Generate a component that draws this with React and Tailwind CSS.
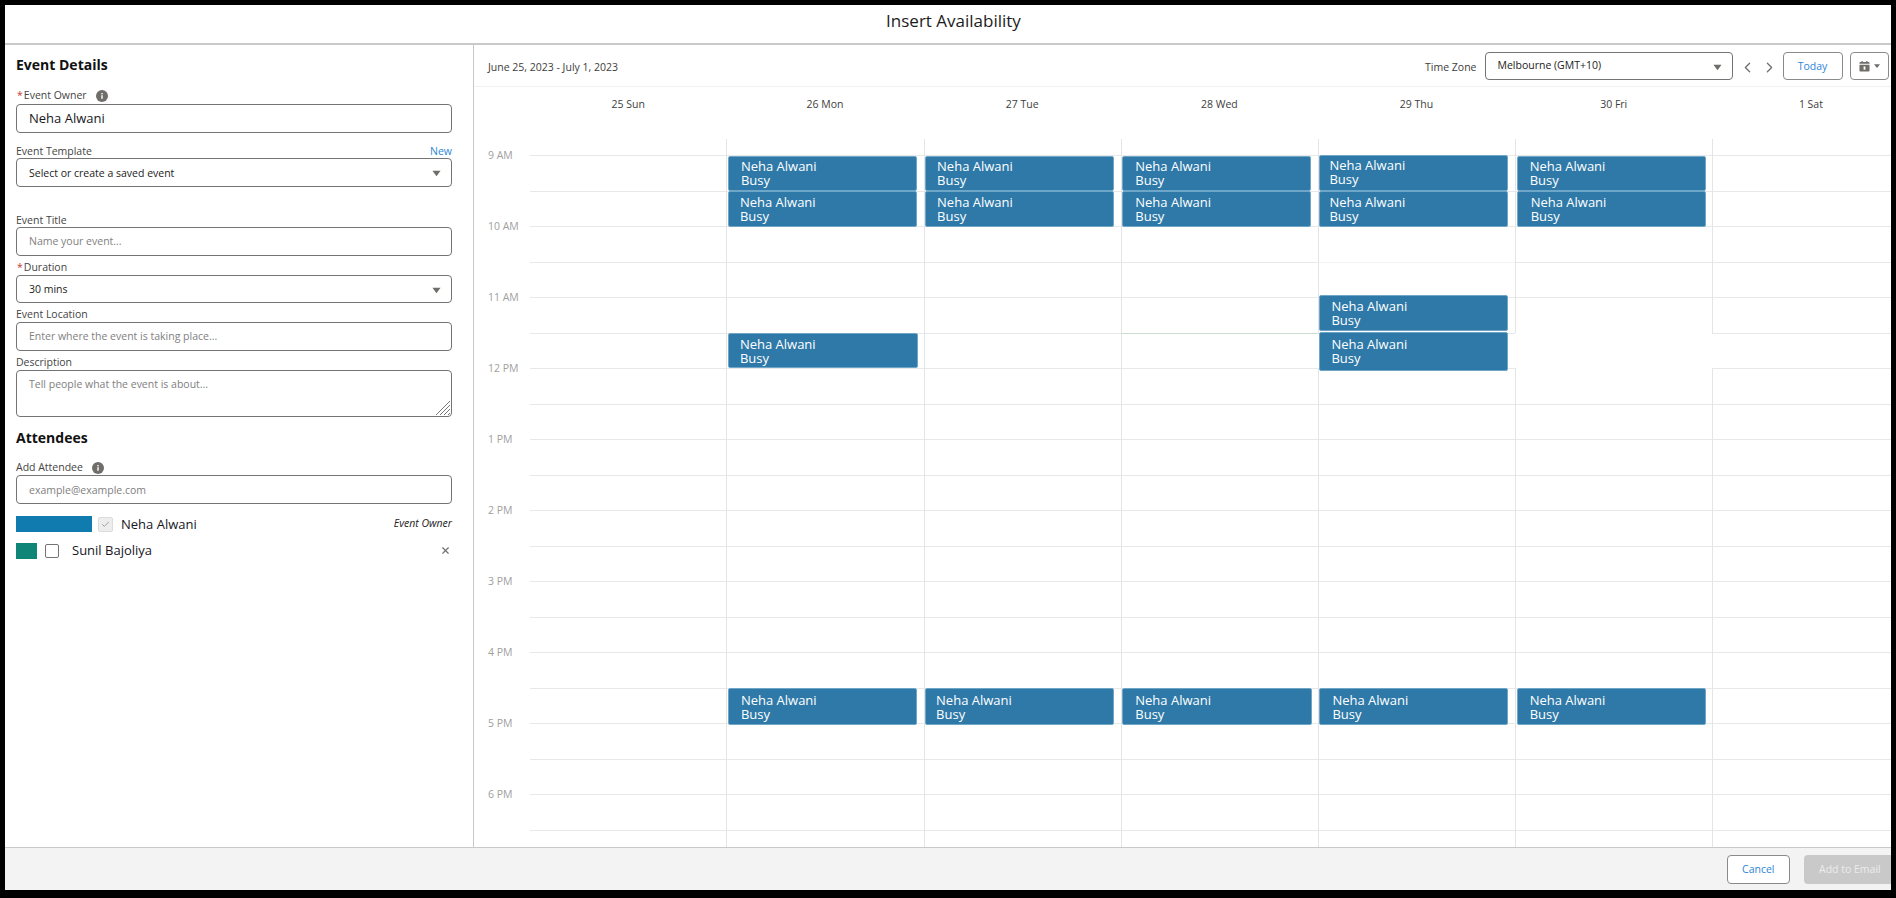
import React from "react";
import { ChevronLeft, ChevronRight, Check, X } from "lucide-react";

const hours = ["9 AM", "10 AM", "11 AM", "12 PM", "1 PM", "2 PM", "3 PM", "4 PM", "5 PM", "6 PM"];
const rows = Array.from({ length: 20 }, (_, i) => i);

// pos = top / height / left / width inside the day column, text = left padding, top padding and line height
const mon = [
  { pos: "top-[17px] h-[35px] left-[1.5px] w-[189px]", text: "pl-[12px] pt-[3px] leading-[13.5px]" },
  { pos: "top-[52px] h-[35.5px] left-[1.5px] w-[189px]", text: "pl-[11px] pt-[3px] leading-[14px]" },
  { pos: "top-[194px] h-[35px] left-[1.5px] w-[190px]", text: "pl-[11px] pt-[4px] leading-[13.5px]" },
  { pos: "top-[549px] h-[36.5px] left-[1.5px] w-[189px]", text: "pl-[12px] pt-[5px] leading-[13.5px]" },
];
const tue = [
  { pos: "top-[17px] h-[35px] left-[1.5px] w-[189px]", text: "pl-[11px] pt-[3px] leading-[13.5px]" },
  { pos: "top-[52px] h-[35.5px] left-[1.5px] w-[189px]", text: "pl-[11px] pt-[3px] leading-[14px]" },
  { pos: "top-[549px] h-[36.5px] left-[1.5px] w-[189px]", text: "pl-[10px] pt-[5px] leading-[13.5px]" },
];
const wed = [
  { pos: "top-[17px] h-[35px] left-[1.5px] w-[189px]", text: "pl-[12px] pt-[3px] leading-[13.5px]" },
  { pos: "top-[52px] h-[35.5px] left-[1.5px] w-[189px]", text: "pl-[12px] pt-[3px] leading-[14px]" },
  { pos: "top-[549px] h-[36.5px] left-[1.5px] w-[190px]", text: "pl-[12px] pt-[5px] leading-[13.5px]" },
];
const thu = [
  { pos: "top-[16px] h-[36px] left-[1.5px] w-[189px]", text: "pl-[9px] pt-[3px] leading-[13.5px]" },
  { pos: "top-[52px] h-[35.5px] left-[1.5px] w-[189px]", text: "pl-[9px] pt-[3px] leading-[14px]" },
  { pos: "top-[156px] h-[36px] left-[1.5px] w-[189px]", text: "pl-[11px] pt-[3px] leading-[14px]" },
  { pos: "top-[193px] h-[39px] left-[1.5px] w-[189px]", text: "pl-[11px] pt-[4px] leading-[14px]" },
  { pos: "top-[549px] h-[36.5px] left-[1.5px] w-[189px]", text: "pl-[12px] pt-[5px] leading-[13.5px]" },
];
const fri = [
  { pos: "top-[17px] h-[35px] left-[1.5px] w-[189px]", text: "pl-[12px] pt-[3px] leading-[13.5px]" },
  { pos: "top-[52px] h-[35.5px] left-[1.5px] w-[189px]", text: "pl-[13px] pt-[3px] leading-[14px]" },
  { pos: "top-[549px] h-[36.5px] left-[1.5px] w-[189px]", text: "pl-[12px] pt-[5px] leading-[13.5px]" },
];

const days = [
  { label: "25 Sun", width: "w-[196.4px]", first: true, events: [] },
  { label: "26 Mon", width: "w-[197.2px]", events: mon },
  { label: "27 Tue", width: "w-[197.2px]", events: tue },
  { label: "28 Wed", width: "w-[197.2px]", events: wed, greenRow: 5 },
  { label: "29 Thu", width: "w-[197.2px]", events: thu, faintRow: 3, noLeft: [5] },
  { label: "30 Fri", width: "w-[197.2px]", events: fri, noTop: [5, 6], noLeft: [5] },
  { label: "1 Sat", width: "w-[197.2px]", events: [], noLeft: [5] },
];

const cellClass = (day, row) => {
  let top = "border-t border-t-[#e8e8e8]";
  if (day.noTop && day.noTop.includes(row)) top = "";
  if (day.greenRow === row) top = "border-t border-t-[#cfdcd2]";
  if (day.faintRow === row) top = "border-t border-t-[#f3f3f3]";
  const left = day.first || (day.noLeft && day.noLeft.includes(row)) ? "" : "border-l border-l-[#e4e4e4]";
  return `h-[35.5px] ${top} ${left}`;
};

const InfoIcon = () => (
  <svg viewBox="0 0 12 12" className="w-3 h-3 ml-[9px]">
    <circle cx="6" cy="6" r="6" fill="#706e6b" />
    <rect x="5.3" y="5.2" width="1.4" height="3.6" fill="#fff" />
    <rect x="5.3" y="3" width="1.4" height="1.4" fill="#fff" />
  </svg>
);

const Caret = () => (
  <svg viewBox="0 0 10 7" className="w-[9px] h-[7px] mt-[3px]">
    <path d="M0.5 0.5h9L5 6.5z" fill="#706e6b" />
  </svg>
);

const Label = ({ required, children, className = "" }) => (
  <div className={`flex items-center h-[14px] text-[10.5px] text-[#444] ${className}`}>
    {required && <span className="text-[#c23934] ml-[1px] mr-[1px]">*</span>}
    {children}
  </div>
);

const TextInput = ({ placeholder }) => (
  <input
    readOnly
    placeholder={placeholder}
    className="block w-full h-[28.5px] px-[12px] border border-[#747474] rounded-[4px] bg-white text-[10.5px] placeholder:text-[#808080] outline-none"
  />
);

const SelectBox = ({ value, className = "", textClass = "" }) => (
  <div className={`flex items-center justify-between h-[28.5px] pl-[12px] pr-[10px] border border-[#747474] rounded-[4px] bg-white text-[10.5px] text-[#222] ${className}`}>
    <span className={textClass}>{value}</span>
    <Caret />
  </div>
);

const EventCard = ({ pos, text }) => (
  <div className={`absolute ${pos} bg-[#2e79a8] border border-[#6ea6c8] rounded-[2px] text-white text-[13px] ${text}`}>
    <div>Neha Alwani</div>
    <div>Busy</div>
  </div>
);

export default function App() {
  return (
    <div className="h-[898px] w-full bg-black pt-[5px] pl-[5px] pr-[5px] pb-[8px] font-['Open_Sans',sans-serif]">
      <div className="h-full flex flex-col bg-white overflow-hidden">
        <div className="h-[40px] shrink-0 flex items-center justify-center border-b-2 border-[#c9c9c9] pb-[7px] pl-[11px] text-[17px] text-[#1c1c1c]">
          Insert Availability
        </div>

        <div className="flex-1 min-h-0 flex">
          {/* Event form */}
          <div className="w-[469px] shrink-0 border-r border-[#c9c9c9] pl-[11px] pr-[21px] pt-[12px]">
            <h2 className="text-[14px] leading-[16px] font-bold text-[#111]">Event Details</h2>
            <Label required className="mt-[16px] mb-[1px]">
              Event Owner
              <InfoIcon />
            </Label>
            <div className="flex items-center h-[28.5px] pt-[1px] px-[12px] border border-[#747474] rounded-[4px] text-[13px] text-[#16161d]">
              Neha Alwani
            </div>

            <div className="flex justify-between items-center mt-[12px] -mb-[1.5px] h-[15px] text-[10.5px]">
              <span className="text-[#444]">Event Template</span>
              <span className="text-[#2f85d8]">New</span>
            </div>
            <SelectBox value="Select or create a saved event" textClass="mt-[3px]" />

            <Label className="mt-[27px] -mb-[0.5px]">Event Title</Label>
            <TextInput placeholder="Name your event..." />

            <Label required className="mt-[5px]">Duration</Label>
            <SelectBox value="30 mins" textClass="mt-[2px]" />

            <Label className="mt-[4.5px] mb-[0.7px]">Event Location</Label>
            <TextInput placeholder="Enter where the event is taking place..." />

            <Label className="mt-[4.8px] mb-[0.7px]">Description</Label>
            <div className="relative">
              <textarea
                readOnly
                placeholder="Tell people what the event is about..."
                className="block w-full h-[47px] px-[12px] py-[6px] resize-none border border-[#747474] rounded-[4px] text-[10.5px] placeholder:text-[#808080] outline-none"
              />
              <svg viewBox="0 0 16 16" className="absolute right-[1px] bottom-[1px] w-4 h-4">
                <path d="M1 15L15 1M5 15L15 5M9 15L15 9M13 15L15 13" stroke="#777" strokeWidth="1" fill="none" />
              </svg>
            </div>

            <h2 className="mt-[13.2px] text-[14px] leading-[16px] font-bold text-[#111]">Attendees</h2>
            <Label className="mt-[14.3px] mb-[0.7px]">
              Add Attendee
              <InfoIcon />
            </Label>
            <TextInput placeholder="example@example.com" />

            <div className="flex items-center mt-[12.5px] h-[16px]">
              <div className="w-[76px] h-[16px] bg-[#0f7bae]" />
              <div className="ml-[6px] w-[15px] h-[15px] flex items-center justify-center bg-[#ededed] border border-[#dcdcdc] rounded-[2px]">
                <Check size={9} color="#9a9a9a" strokeWidth={2.5} />
              </div>
              <span className="ml-[8px] mt-[1px] text-[13px] text-[#16161d]">Neha Alwani</span>
              <span className="ml-auto text-[10.5px] italic text-[#222]">Event Owner</span>
            </div>
            <div className="flex items-center mt-[10.3px] h-[16px]">
              <div className="w-[21px] h-[16px] bg-[#0f8578]" />
              <div className="ml-[8px] w-[14px] h-[14px] bg-white border border-[#747474] rounded-[2px]" />
              <span className="ml-[13px] text-[13px] text-[#16161d]">Sunil Bajoliya</span>
              <X size={11} color="#706e6b" strokeWidth={2.5} className="ml-auto mr-[1px]" />
            </div>
          </div>

          {/* Calendar */}
          <div className="flex-1 min-w-0 flex flex-col overflow-hidden">
            <div className="h-[42px] shrink-0 flex items-center border-b border-[#f1f1f1] pl-[14px] pr-[2px] pt-[1px]">
              <span className="mt-[3px] text-[10.5px] text-[#3e3e3c]">June 25, 2023 - July 1, 2023</span>
              <span className="ml-auto mr-[8px] mt-[3px] text-[10.5px] text-[#3e3e3c]">Time Zone</span>
              <SelectBox value="Melbourne (GMT+10)" className="w-[248px]" />
              <ChevronLeft size={17} color="#706e6b" strokeWidth={1.8} className="ml-[6px] mt-[3px]" />
              <ChevronRight size={17} color="#706e6b" strokeWidth={1.8} className="ml-[5px] mt-[3px]" />
              <button className="ml-[5px] w-[60px] h-[28.5px] pt-[2px] border border-[#8a8a8a] rounded-[4px] text-[10.5px] text-[#2f85d8]">
                Today
              </button>
              <button className="ml-[7px] w-[39.5px] h-[28.5px] flex items-center justify-center gap-[4px] border border-[#8a8a8a] rounded-[4px]">
                <svg viewBox="0 0 12 12" className="w-[11px] h-[12px]">
                  <path d="M0.5 4.5h11V11a1 1 0 0 1-1 1h-9a1 1 0 0 1-1-1zM0.5 3.5V2.6a1 1 0 0 1 1-1h1.2V0.5h1.4v1.1h3.8V0.5h1.4v1.1h1.2a1 1 0 0 1 1 1v.9z" fill="#706e6b" />
                  <rect x="5" y="6.5" width="2" height="3.5" fill="#fff" />
                </svg>
                <svg viewBox="0 0 8 5" className="w-[6px] h-[4px]">
                  <path d="M0 0h8L4 5z" fill="#706e6b" />
                </svg>
              </button>
            </div>

            <div className="h-[52px] shrink-0 flex pt-[10px] pl-[56px] text-[10.5px] leading-[15px] text-[#3e3e3c]">
              {days.map((day) => (
                <div key={day.label} className={`${day.width} shrink-0 text-center`}>{day.label}</div>
              ))}
            </div>

            <div className="flex-1 min-h-0 flex">
              <div className="w-[56px] shrink-0 -mt-[19px] pl-[14px]">
                {hours.map((h) => (
                  <div key={h} className="h-[71px] flex items-center text-[10.5px] text-[#a0a0a0]">{h}</div>
                ))}
              </div>
              {days.map((day) => (
                <div key={day.label} className={`relative shrink-0 ${day.width}`}>
                  <div className={day.first ? "h-[16.3px]" : "h-[16.3px] border-l border-l-[#e4e4e4]"} />
                  {rows.map((row) => (
                    <div key={row} className={cellClass(day, row)} />
                  ))}
                  {day.events.map((ev) => (
                    <EventCard key={ev.pos} pos={ev.pos} text={ev.text} />
                  ))}
                </div>
              ))}
            </div>
          </div>
        </div>

        <div className="h-[43px] shrink-0 flex items-center justify-end gap-[14.5px] bg-[#f3f3f3] border-t border-[#c9c9c9] pt-[1px] overflow-hidden">
          <button className="w-[62.5px] h-[29px] shrink-0 bg-white border border-[#8a8a8a] rounded-[4px] text-[10.5px] text-[#2f85d8]">
            Cancel
          </button>
          <button className="w-[92px] h-[29px] shrink-0 -mr-[5px] bg-[#c9c9c9] rounded-[4px] text-left pl-[15px] text-[10.5px] text-[#ececec]">
            Add to Email
          </button>
        </div>
      </div>
    </div>
  );
}
